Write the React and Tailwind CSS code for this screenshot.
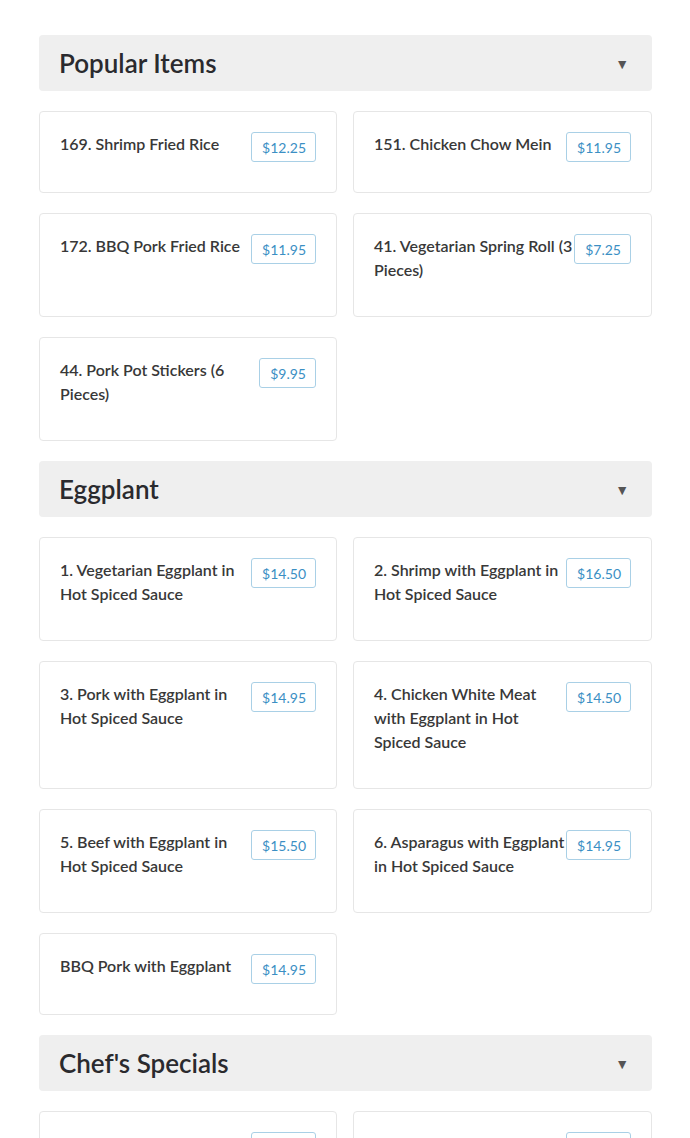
import React from "react";

const sections = [
  {
    title: "Popular Items",
    items: [
      ["169. Shrimp Fried Rice", "$12.25"],
      ["151. Chicken Chow Mein", "$11.95"],
      ["172. BBQ Pork Fried Rice", "$11.95"],
      ["41. Vegetarian Spring Roll (3 Pieces)", "$7.25"],
      ["44. Pork Pot Stickers (6 Pieces)", "$9.95"],
    ],
  },
  {
    title: "Eggplant",
    items: [
      ["1. Vegetarian Eggplant in Hot Spiced Sauce", "$14.50"],
      ["2. Shrimp with Eggplant in Hot Spiced Sauce", "$16.50"],
      ["3. Pork with Eggplant in Hot Spiced Sauce", "$14.95"],
      ["4. Chicken White Meat with Eggplant in Hot Spiced Sauce", "$14.50"],
      ["5. Beef with Eggplant in Hot Spiced Sauce", "$15.50"],
      ["6. Asparagus with Eggplant in Hot Spiced Sauce", "$14.95"],
      ["BBQ Pork with Eggplant", "$14.95"],
    ],
  },
  {
    title: "Chef's Specials",
    items: [
      ["Seafood Delight Combination", "$21.95"],
      ["Orange Flavored Beef", "$17.95"],
    ],
  },
];

function Card({ name, price }) {
  return (
    <div className="border border-[#e6e6e6] rounded-[4px] bg-white py-5 pl-5 pr-5">
      <div className="flex items-start min-h-[40px]">
        <div className="flex-1 text-[16px] leading-[24px] font-semibold text-[#383838] pb-[14px]">
          {name}
        </div>
        <div className="shrink-0 h-[30px] flex items-center pl-[10px] pr-[9px] border border-[#a9d0e6] rounded-[3px] text-[14px] text-[#3b8fc4]">
          {price}
        </div>
      </div>
    </div>
  );
}

export default function App() {
  return (
    <div
      className="bg-white min-h-[1138px] pl-[39px] pr-[38px] pt-[35px]"
      style={{ fontFamily: "Lato, 'Noto Sans', sans-serif" }}
    >
      <div className="flex flex-col gap-5">
        {sections.map((s) => (
          <div key={s.title} className="flex flex-col gap-5">
            <div className="h-[56px] bg-[#efefef] rounded-[4px] flex items-center justify-between pl-5 pr-[23px]">
              <h2 className="text-[26px] font-semibold text-[#2a2a2e]">{s.title}</h2>
              <span className="text-[14px] text-[#555]">▼</span>
            </div>
            <div className="grid grid-cols-[298px_1fr] gap-x-4 gap-y-5">
              {s.items.map(([n, p]) => (
                <Card key={n} name={n} price={p} />
              ))}
            </div>
          </div>
        ))}
      </div>
    </div>
  );
}
